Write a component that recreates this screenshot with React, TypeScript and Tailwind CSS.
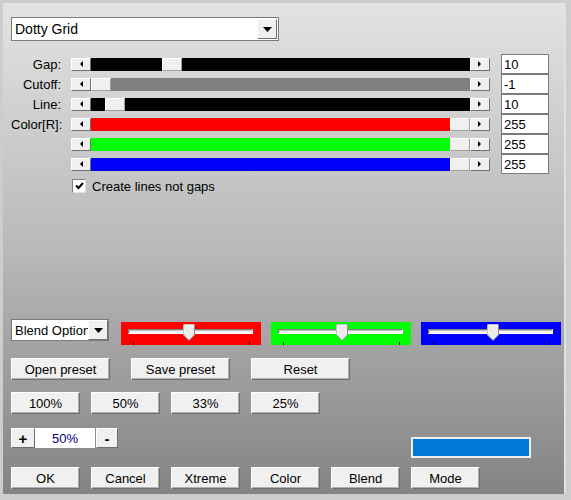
import React from "react";

const font = { fontFamily: '"Liberation Sans", Arial, sans-serif' };

function Btn({ w, children }: { w: string; children: React.ReactNode }) {
  return (
    <div
      className={`${w} h-[22px] flex items-center justify-center bg-[#f0f0f0] border border-t-white border-l-white border-r-[#6e6e6e] border-b-[#6e6e6e] text-[13px] text-black leading-none shadow-[inset_-1px_-1px_0_#b0b0b0]`}
    >
      {children}
    </div>
  );
}

function Arrow({ dir }: { dir: "l" | "r" }) {
  return (
    <div className="w-[20px] h-[13px] shrink-0 bg-[#f0f0f0] border border-t-white border-l-white border-r-[#707070] border-b-[#707070] flex items-center justify-center">
      <svg width="4" height="6" viewBox="0 0 4 6">
        {dir === "l" ? <path d="M4 0 L1 3 L4 6 Z" fill="#000" /> : <path d="M0 0 L3 3 L0 6 Z" fill="#000" />}
      </svg>
    </div>
  );
}

function Thumb() {
  return <div className="w-[20px] h-[13px] shrink-0 bg-[#f0f0f0] border border-t-white border-l-white border-r-[#a0a0a0] border-b-[#a0a0a0]" />;
}

function Scroll({ color, before, after, thumbFirst }: { color: string; before: number; after: number; thumbFirst?: boolean }) {
  return (
    <div className="flex w-[419px] h-[13px] items-stretch">
      <Arrow dir="l" />
      <div className={`${color} flex flex-1`}>
        <div style={{ width: before }} />
        <Thumb />
        <div className="flex-1" />
      </div>
      <Arrow dir="r" />
    </div>
  );
}

function ColorScroll({ color }: { color: string }) {
  return (
    <div className="flex w-[419px] h-[13px] items-stretch">
      <Arrow dir="l" />
      <div className={`${color} flex-1`} />
      <Thumb />
      <Arrow dir="r" />
    </div>
  );
}

function Row({ label, children, value }: { label: string; children: React.ReactNode; value: string }) {
  return (
    <div className="flex items-center h-[20px]">
      <div className="w-[50px] text-right text-[13px] text-black leading-none pr-0">{label}</div>
      <div className="w-[10px]" />
      {children}
      <div className="w-[11px]" />
      <div className="w-[48px] h-[20px] bg-white border border-[#7a7a7a] text-[13px] text-black flex items-center pl-[2px] leading-none">
        {value}
      </div>
    </div>
  );
}

function ColorPanel({ bg, thumb }: { bg: string; thumb: number }) {
  return (
    <div className={`${bg} w-[140px] h-[23px] relative`}>
      <div className="absolute left-[7px] top-[7px] w-[125px] h-[5px] bg-[#f4f4f4] border border-t-[#808080] border-l-[#808080] border-r-white border-b-white shadow-[inset_1px_1px_0_#c0c0c0]" />
      <svg className="absolute top-[2px]" style={{ left: thumb }} width="12" height="17" viewBox="0 0 12 17">
        <path d="M0.5 0.5 H11.5 V11 L6 16.5 L0.5 11 Z" fill="#ececec" stroke="#8a8a8a" />
        <path d="M1 1 H11 M1 1 V11" stroke="#fff" />
      </svg>
      <div className="absolute left-[12px] top-[20px] w-[1px] h-[3px] bg-black" />
      <div className="absolute left-[128px] top-[20px] w-[1px] h-[3px] bg-black" />
    </div>
  );
}

export default function App() {
  return (
    <div style={font} className="w-[571px] h-[500px] bg-[#cdcdcd] pl-[3px] pt-[3px] pr-[5px] pb-[6px]">
      <div className="h-full bg-gradient-to-b from-[#e3e3e3] via-[#b9b9b9] to-[#848484] flex flex-col pl-[8px] pt-[14px] border-r-[2px] border-r-[#e0e0e0]">
        {/* dropdown */}
        <div className="w-[268px] h-[24px] bg-white border border-[#7a7a7a] flex items-center">
          <div className="flex-1 text-[14px] text-black pl-[3px] leading-none">Dotty Grid</div>
          <div className="w-[20px] h-[20px] mr-[1px] bg-[#f0f0f0] border border-t-white border-l-white border-r-[#707070] border-b-[#707070] flex items-center justify-center">
            <svg width="9" height="5" viewBox="0 0 9 5"><path d="M0 0 H9 L4.5 5 Z" fill="#000" /></svg>
          </div>
        </div>

        <div className="mt-[13px] flex flex-col">
          <Row label="Gap:" value="10">
            <Scroll color="bg-black" before={71} after={0} />
          </Row>
          <Row label="Cutoff:" value="-1">
            <div className="flex w-[419px] h-[13px] items-stretch">
              <Arrow dir="l" />
              <Thumb />
              <div className="bg-[#808080] flex-1" />
              <Arrow dir="r" />
            </div>
          </Row>
          <Row label="Line:" value="10">
            <Scroll color="bg-black" before={14} after={0} />
          </Row>
          <Row label="Color[R]:" value="255">
            <ColorScroll color="bg-[#ff0000]" />
          </Row>
          <Row label="" value="255">
            <ColorScroll color="bg-[#00ff00]" />
          </Row>
          <Row label="" value="255">
            <ColorScroll color="bg-[#0000ff]" />
          </Row>
        </div>

        <div className="mt-[5px] ml-[61px] flex items-center h-[14px]">
          <div className="w-[14px] h-[14px] bg-white border border-t-[#808080] border-l-[#808080] border-r-[#e0e0e0] border-b-[#e0e0e0] flex items-center justify-center">
            <svg width="9" height="8" viewBox="0 0 9 8"><path d="M1 3.5 L3.5 6 L8 1" stroke="#000" strokeWidth="2" fill="none" /></svg>
          </div>
          <div className="ml-[6px] text-[13px] text-black leading-none">Create lines not gaps</div>
        </div>

        {/* blend row */}
        <div className="mt-[126px] flex items-start">
          <div className="w-[98px] h-[22px] bg-white border border-[#7a7a7a] flex items-center overflow-hidden">
            <div className="w-[76px] overflow-hidden whitespace-nowrap text-[13px] text-black pl-[3px] leading-none">Blend Options</div>
            <div className="w-[20px] h-[20px] bg-[#f0f0f0] border border-t-white border-l-white border-r-[#707070] border-b-[#707070] flex items-center justify-center">
              <svg width="9" height="5" viewBox="0 0 9 5"><path d="M0 0 H9 L4.5 5 Z" fill="#000" /></svg>
            </div>
          </div>
          <div className="ml-[12px] mt-[3px] flex gap-[10px]">
            <ColorPanel bg="bg-[#ff0000]" thumb={62} />
            <ColorPanel bg="bg-[#00ff00]" thumb={65} />
            <ColorPanel bg="bg-[#0000ff]" thumb={66} />
          </div>
        </div>

        <div className="mt-[13px] flex gap-[21px]">
          <Btn w="w-[99px]">Open preset</Btn>
          <Btn w="w-[99px]">Save preset</Btn>
          <Btn w="w-[99px]">Reset</Btn>
        </div>

        <div className="mt-[12px] flex gap-[11px]">
          <Btn w="w-[69px]">100%</Btn>
          <Btn w="w-[69px]">50%</Btn>
          <Btn w="w-[69px]">33%</Btn>
          <Btn w="w-[69px]">25%</Btn>
        </div>

        <div className="flex items-start">
          <div className="mt-[14px] flex items-center h-[20px]">
            <div className="w-[24px] h-[20px] bg-[#f0f0f0] border border-t-white border-l-white border-r-[#6e6e6e] border-b-[#6e6e6e] flex items-center justify-center text-[15px] font-bold leading-none">+</div>
            <div className="w-[60px] h-[20px] bg-white flex items-center justify-center text-[13px] text-[#000080] leading-none">50%</div>
            <div className="ml-[1px] w-[22px] h-[20px] bg-[#f0f0f0] border border-t-white border-l-white border-r-[#6e6e6e] border-b-[#6e6e6e] flex items-center justify-center text-[15px] font-bold leading-none">-</div>
          </div>
          <div className="ml-[293px] mt-[23px] w-[120px] h-[21px] border-[2px] border-[#f0f0f0] bg-[#0078d7]" />
        </div>

        <div className="mt-[9px] flex gap-[11px]">
          <Btn w="w-[69px]">OK</Btn>
          <Btn w="w-[69px]">Cancel</Btn>
          <Btn w="w-[69px]">Xtreme</Btn>
          <Btn w="w-[69px]">Color</Btn>
          <Btn w="w-[69px]">Blend</Btn>
          <Btn w="w-[69px]">Mode</Btn>
        </div>
      </div>
    </div>
  );
}
